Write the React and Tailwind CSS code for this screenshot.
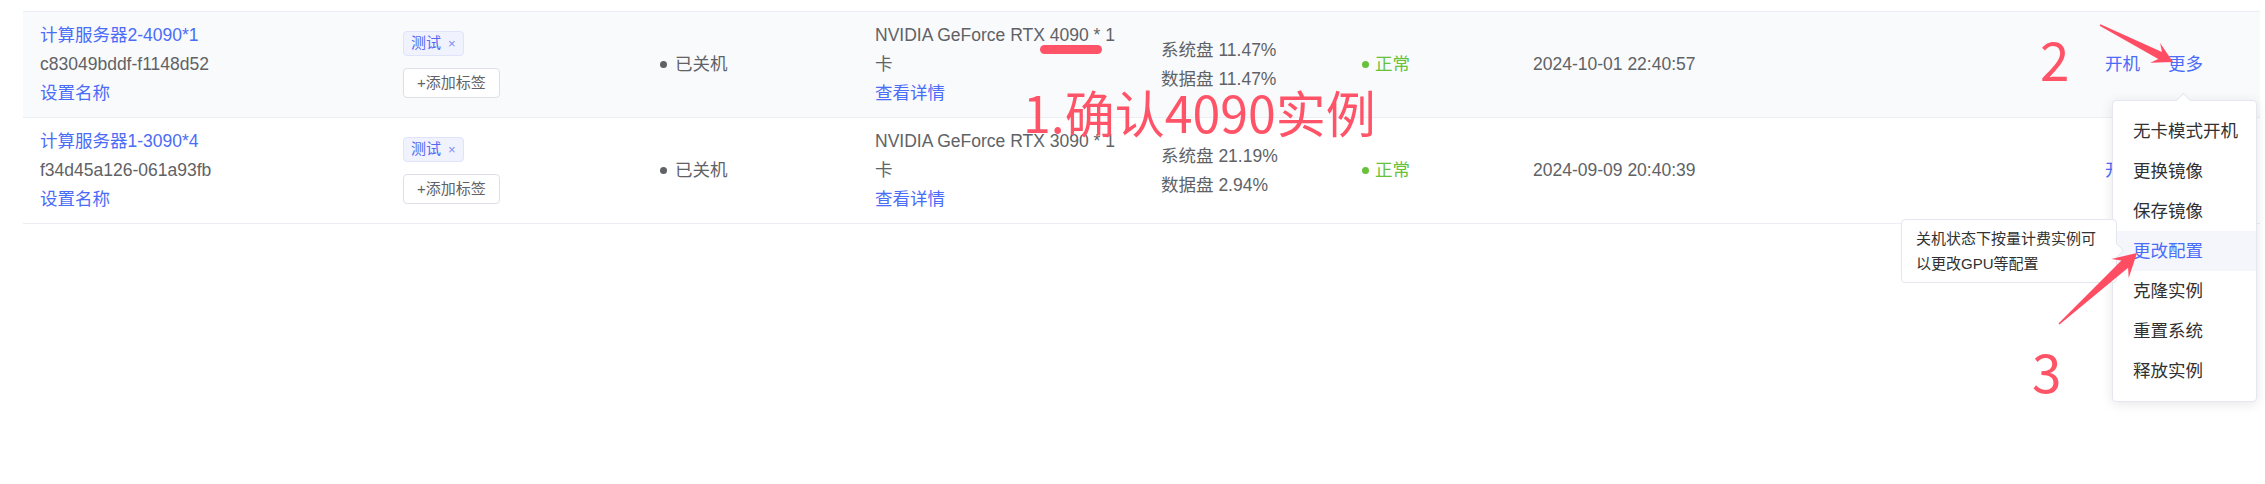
import React from "react";

const rows = [
  {
    name: "计算服务器2-4090*1",
    id: "c83049bddf-f1148d52",
    gpu: "NVIDIA GeForce RTX 4090 * 1 卡",
    sys: "11.47%",
    data: "11.47%",
    date: "2024-10-01 22:40:57",
    hover: true,
  },
  {
    name: "计算服务器1-3090*4",
    id: "f34d45a126-061a93fb",
    gpu: "NVIDIA GeForce RTX 3090 * 1 卡",
    sys: "21.19%",
    data: "2.94%",
    date: "2024-09-09 20:40:39",
    hover: false,
  },
];

const menuItems = ["无卡模式开机", "更换镜像", "保存镜像", "更改配置", "克隆实例", "重置系统", "释放实例"];

function arrowPts(tx, ty, px, py, lh, wb, ws, wt) {
  const dx = px - tx;
  const dy = py - ty;
  const L = Math.hypot(dx, dy);
  const ux = dx / L;
  const uy = dy / L;
  const nx = -uy;
  const ny = ux;
  const bx = px - ux * lh;
  const by = py - uy * lh;
  const sx = px - ux * lh * 0.72;
  const sy = py - uy * lh * 0.72;
  const p = [
    [tx + nx * wt, ty + ny * wt],
    [sx + nx * ws, sy + ny * ws],
    [bx + nx * wb, by + ny * wb],
    [px, py],
    [bx - nx * wb, by - ny * wb],
    [sx - nx * ws, sy - ny * ws],
    [tx - nx * wt, ty - ny * wt],
  ];
  return p.map((q) => q[0].toFixed(1) + "," + q[1].toFixed(1)).join(" ");
}

function Row({ r }) {
  return (
    <div
      className={`grid grid-cols-[363px_257px_215px_286px_201px_171px_572px_172px] h-[106px] items-center border-b border-[#ebeef5] ${
        r.hover ? "bg-[#f9fafc]" : "bg-white"
      }`}
    >
      <div className="pl-[17px] flex flex-col leading-[29px]">
        <span className="text-[#4a6cf7]">{r.name}</span>
        <span>{r.id}</span>
        <span className="text-[#4a6cf7]">设置名称</span>
      </div>
      <div className="pl-[17px] flex flex-col items-start gap-[12px]">
        <span className="inline-flex items-center h-[25px] px-[7px] rounded-[4px] border border-[#dfe3fc] bg-[#f0f2fe] text-[15px] text-[#5468f5]">
          测试
          <span className="ml-[7px] text-[13px] leading-none text-[#7d8cf5]">×</span>
        </span>
        <span className="flex items-center justify-center h-[30px] w-[97px] rounded-[4px] border border-[#dcdfe6] bg-white text-[15px] text-[#606266]">
          +添加标签
        </span>
      </div>
      <div className="pl-[17px] flex items-center gap-[8px]">
        <span className="w-[7px] h-[7px] rounded-full bg-[#606266]" />
        <span>已关机</span>
      </div>
      <div className="pl-[17px] flex flex-col leading-[29px]">
        <span className="w-[250px]">{r.gpu}</span>
        <span className="text-[#4a6cf7]">查看详情</span>
      </div>
      <div className="pl-[17px] flex flex-col leading-[29px]">
        <span>系统盘 {r.sys}</span>
        <span>数据盘 {r.data}</span>
      </div>
      <div className="pl-[17px] flex items-center gap-[6px] text-[#67c23a]">
        <span className="w-[7px] h-[7px] rounded-full bg-[#67c23a]" />
        <span>正常</span>
      </div>
      <div className="pl-[17px]">{r.date}</div>
      <div className="pl-[17px] flex items-center gap-[28px] text-[#4a6cf7]">
        <span>开机</span>
        <span>更多</span>
      </div>
    </div>
  );
}

export default function App() {
  return (
    <div className="relative w-[2265px] h-[484px] bg-white overflow-hidden font-['Liberation_Sans','Noto_Sans_CJK_SC',sans-serif] text-[17.5px] text-[#606266]">
      <div className="ml-[23px] mt-[11px] w-[2237px] border-t border-[#ebeef5]">
        {rows.map((r, i) => (
          <Row key={i} r={r} />
        ))}
      </div>

      {/* dropdown menu */}
      <div className="absolute left-[2112px] top-[100px] w-[145px] z-10 bg-white border border-[#e4e7ed] rounded-[4px] shadow-[0_2px_12px_rgba(0,0,0,0.1)] py-[10px]">
        <span className="absolute -top-[6px] left-[65px] w-[11px] h-[11px] bg-white border-l border-t border-[#e4e7ed] rotate-45" />
        {menuItems.map((m) => (
          <div
            key={m}
            className={`h-[40px] flex items-center pl-[20px] text-[17.5px] ${
              m === "更改配置" ? "bg-[#f4f6fb] text-[#4a6cf7]" : "text-[#303133]"
            }`}
          >
            {m}
          </div>
        ))}
      </div>

      {/* tooltip */}
      <div className="absolute left-[1901px] top-[219px] w-[216px] z-20 bg-white border border-[#e4e7ed] rounded-[4px] px-[14px] py-[6px] text-[15px] leading-[25px] text-[#303133]">
        关机状态下按量计费实例可以更改GPU等配置
        <span className="absolute -right-[6px] top-[25px] w-[11px] h-[11px] bg-white border-r border-t border-[#e4e7ed] rotate-45" />
      </div>

      {/* annotations */}
      <div className="absolute left-[1040px] top-[45px] w-[62px] h-[9px] rounded-full bg-[#ff5468] z-30" />
      <div className="absolute left-[1023px] top-[86px] z-30 text-[50px] leading-none text-[#ff5468] font-['Noto_Sans_CJK_SC',sans-serif] whitespace-nowrap">
        1.确认4090实例
      </div>
      <div className="absolute left-[2040px] top-[32px] z-30 text-[53px] leading-none text-[#ff5468] font-['Noto_Sans_CJK_SC',sans-serif]">
        2
      </div>
      <div className="absolute left-[2032px] top-[344px] z-30 text-[53px] leading-none text-[#ff5468] font-['Noto_Sans_CJK_SC',sans-serif]">
        3
      </div>
      <svg className="absolute left-0 top-0 z-40 pointer-events-none" width="2265" height="484" viewBox="0 0 2265 484">
        <polygon points={arrowPts(2100, 25, 2173, 62, 20, 11, 4, 0.8)} fill="#ff4d63" />
        <polygon points={arrowPts(2059, 324, 2137, 253, 23, 13, 5, 0.8)} fill="#ff4d63" />
      </svg>
    </div>
  );
}
